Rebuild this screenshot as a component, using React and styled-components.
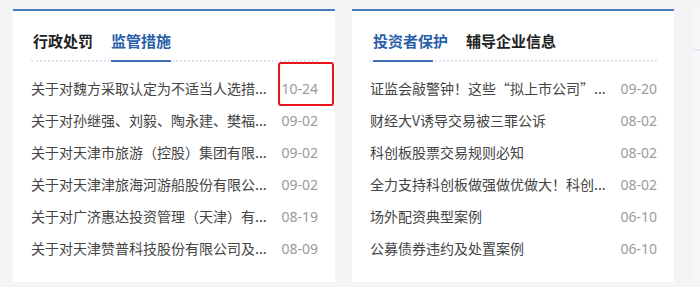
import React from 'react';
import styled, { createGlobalStyle } from 'styled-components';

const GlobalStyle = createGlobalStyle`
  html, body {
    margin: 0;
    padding: 0;
    background: #f4f4f4;
    font-family: "Noto Sans CJK SC", "Noto Sans", sans-serif;
  }
`;

const Page = styled.div`
  display: flex;
  align-items: flex-start;
  gap: 17px;
  padding: 9px 0 0 13px;
  width: 700px;
  height: 287px;
  box-sizing: border-box;
  overflow: hidden;
`;

const Card = styled.section`
  position: relative;
  flex: none;
  width: 322px;
  height: 273px;
  box-sizing: border-box;
  background: #fff;
  border-top: 2px solid #4a7cbf;
  padding: 0 17px 0 18px;
`;

const Edge = styled.div`
  flex: none;
  width: 20px;
  height: 273px;
  margin-left: 3px;
  background: #f7f7f7;
  padding-top: 40px;
  box-sizing: border-box;
`;

const EdgeLine = styled.div`
  height: 2px;
  background: #dfe8f4;
`;

const TabBar = styled.div`
  display: flex;
  gap: 18px;
  margin-top: 20px;
  padding-left: ${p => p.$inset}px;
  border-bottom: 2px dotted #dde6f2;
`;

const Tab = styled.div`
  position: relative;
  font-size: 15px;
  line-height: 20px;
  font-weight: 700;
  color: ${p => (p.$active ? '#2a5fa9' : '#222')};
  padding-bottom: 9px;

  &::after {
    content: '';
    display: ${p => (p.$active ? 'block' : 'none')};
    position: absolute;
    left: 0;
    bottom: -2px;
    width: 60px;
    height: 2px;
    background: #3d6fb5;
  }
`;

const List = styled.ul`
  list-style: none;
  margin: 10px 0 0;
  padding: 0;
`;

const Row = styled.li`
  display: flex;
  justify-content: space-between;
  align-items: center;
  height: 32px;
  font-size: 14px;
`;

const Title = styled.span`
  color: #444;
  white-space: nowrap;
`;

const Date = styled.span`
  font-family: "Noto Sans", "Liberation Sans", sans-serif;
  color: #9a9a9a;
`;

const Highlight = styled.div`
  position: absolute;
  left: 265px;
  top: 51px;
  width: 56px;
  height: 44px;
  box-sizing: border-box;
  border: 2px solid #e8141b;
  border-radius: 3px;
`;

const left = [
  ['关于对魏方采取认定为不适当人选措...', '10-24'],
  ['关于对孙继强、刘毅、陶永建、樊福...', '09-02'],
  ['关于对天津市旅游（控股）集团有限...', '09-02'],
  ['关于对天津津旅海河游船股份有限公...', '09-02'],
  ['关于对广济惠达投资管理（天津）有...', '08-19'],
  ['关于对天津赞普科技股份有限公司及...', '08-09'],
];

const right = [
  ['证监会敲警钟！这些“拟上市公司”...', '09-20'],
  ['财经大V诱导交易被三罪公诉', '08-02'],
  ['科创板股票交易规则必知', '08-02'],
  ['全力支持科创板做强做优做大！科创...', '08-02'],
  ['场外配资典型案例', '06-10'],
  ['公募债券违约及处置案例', '06-10'],
];

const Panel = ({ tabs, active, items, inset, children }) => (
  <Card>
    <TabBar $inset={inset}>
      {tabs.map((t, i) => (
        <Tab key={t} $active={i === active}>{t}</Tab>
      ))}
    </TabBar>
    <List>
      {items.map(([title, date]) => (
        <Row key={title}>
          <Title>{title}</Title>
          <Date>{date}</Date>
        </Row>
      ))}
    </List>
    {children}
  </Card>
);

export default function App() {
  return (
    <>
      <GlobalStyle />
      <Page>
        <Panel tabs={['行政处罚', '监管措施']} active={1} items={left} inset={2}>
          <Highlight />
        </Panel>
        <Panel tabs={['投资者保护', '辅导企业信息']} active={0} items={right} inset={3} />
        <Edge>
          <EdgeLine />
        </Edge>
      </Page>
    </>
  );
}
